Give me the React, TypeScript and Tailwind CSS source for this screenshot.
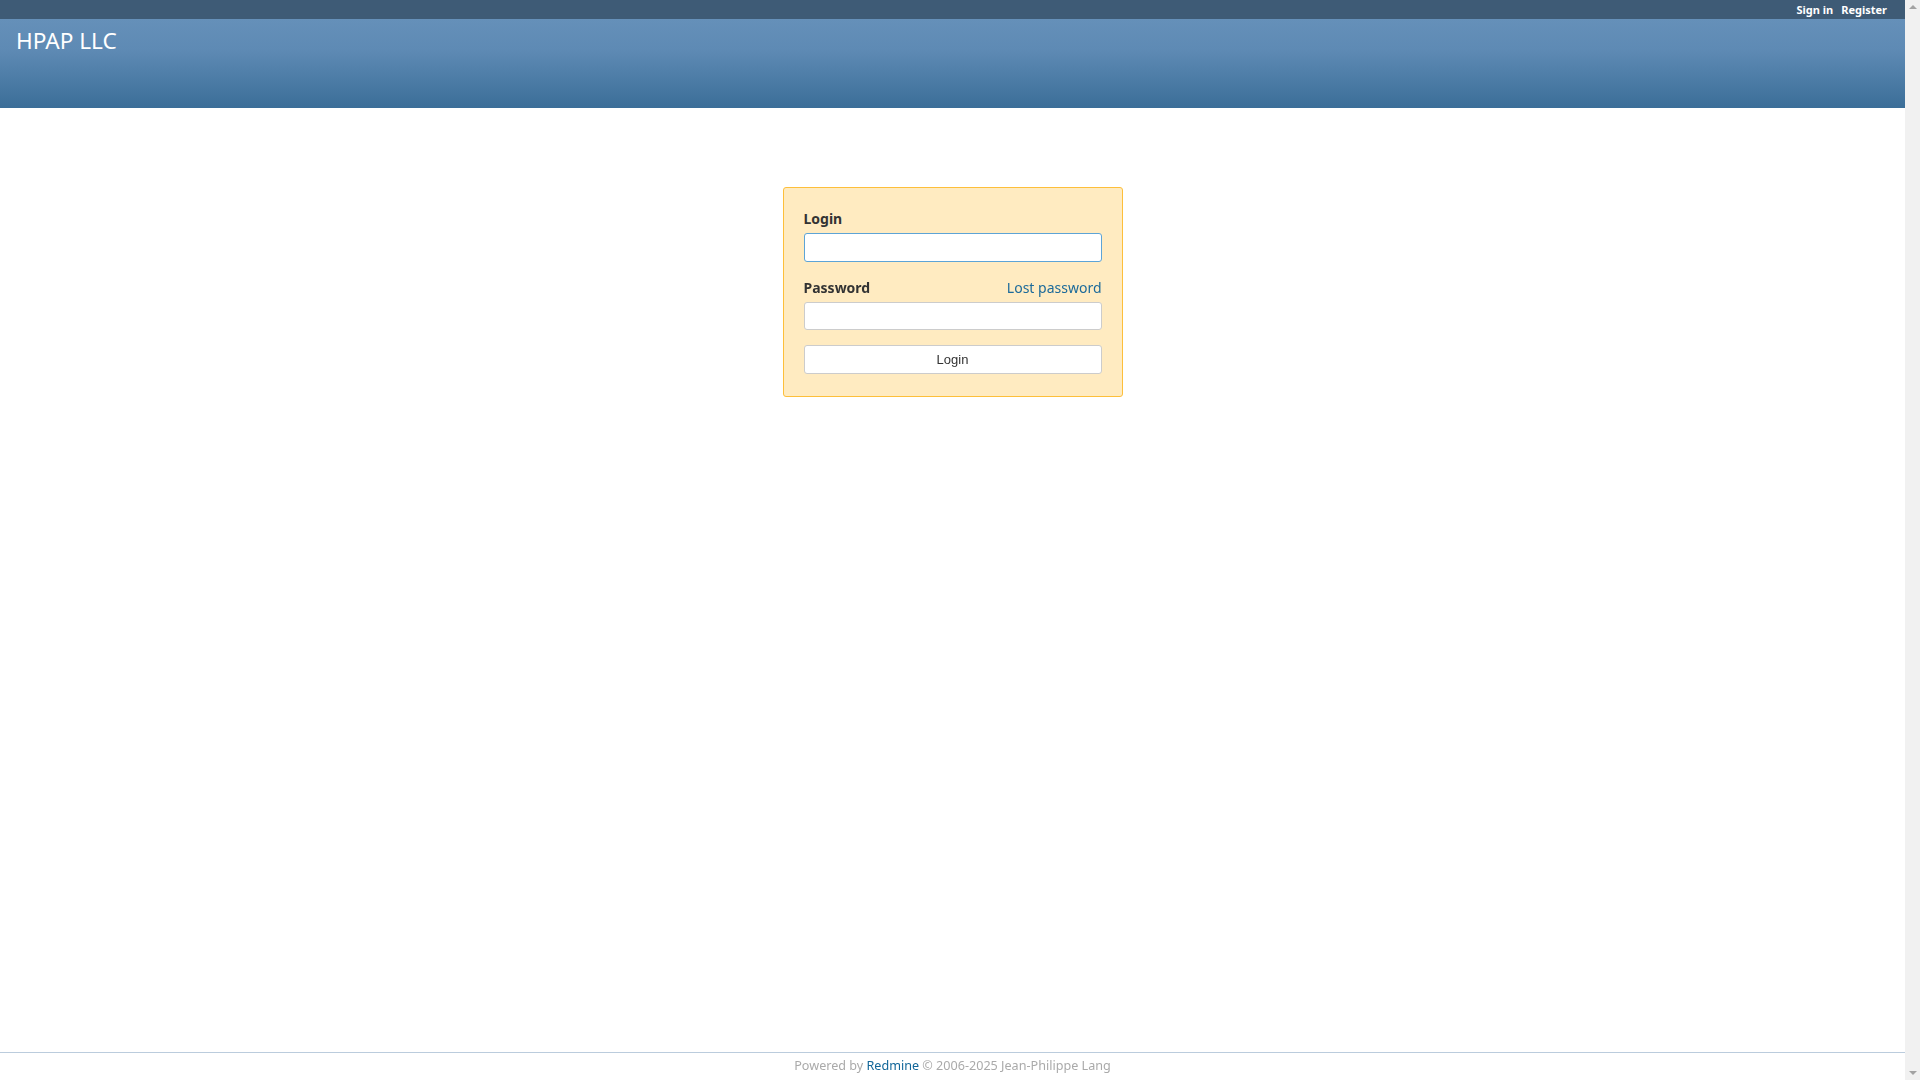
import React from 'react';

const font = { fontFamily: '"Noto Sans", "Open Sans", sans-serif' };

function TopMenu() {
  return (
    <div className="h-[19px] bg-[#3e5b76] flex items-center justify-end pr-[18px] gap-[8px] text-[11px] font-bold text-white leading-none">
      <a href="#">Sign in</a>
      <a href="#">Register</a>
    </div>
  );
}

function Header() {
  return (
    <div className="h-[89px] bg-[linear-gradient(to_bottom,#6590b9_0%,#5e8ab4_35%,#3b6e98_100%)] pl-[16px] pt-[6px]">
      <h1 className="text-[22.6px] text-white font-normal leading-[32px]">HPAP LLC</h1>
    </div>
  );
}

function LoginBox() {
  return (
    <div className="w-[340px] bg-[#ffebc1] border border-[#fdbf3b] rounded-[3px] px-[20px] pt-[21px] pb-[22px] text-[14px] text-[#333]">
      <label className="block font-bold leading-[20px]">Login</label>
      <input
        autoFocus
        className="mt-[4px] block w-full h-[29px] bg-white border border-[#5da4d6] rounded-[3px] outline-none px-2"
      />
      <div className="mt-[16px] flex justify-between items-end leading-[20px]">
        <label className="font-bold">Password</label>
        <a href="#" className="text-[#1c6a9a]">Lost password</a>
      </div>
      <input
        type="password"
        className="mt-[4px] block w-full h-[28px] bg-white border border-[#cccccc] rounded-[3px] outline-none px-2"
      />
      <button
        className="mt-[15px] block w-full h-[29px] bg-white border border-[#cccccc] rounded-[3px] text-[13px] text-[#333]"
        style={{ fontFamily: '"Liberation Sans", Arial, sans-serif' }}
      >
        Login
      </button>
    </div>
  );
}

function Footer() {
  return (
    <div className="border-t border-[#bbccdd] h-[28px] flex items-center justify-center text-[12.6px] text-[#aaaaaa]">
      <span>
        Powered by <a href="#" className="text-[#116699]">Redmine</a> © 2006-2025 Jean-Philippe Lang
      </span>
    </div>
  );
}

function Scrollbar() {
  return (
    <div className="w-[15px] bg-[#f1f1f1] flex flex-col justify-between items-center py-[5px]">
      <div className="w-0 h-0 border-l-[4px] border-r-[4px] border-b-[4px] border-l-transparent border-r-transparent border-b-[#a3a3a3]" />
      <div className="w-0 h-0 border-l-[4px] border-r-[4px] border-t-[4px] border-l-transparent border-r-transparent border-t-[#a3a3a3]" />
    </div>
  );
}

export default function App() {
  return (
    <div className="w-screen h-screen overflow-hidden flex bg-white" style={font}>
      <div className="flex-1 flex flex-col">
        <TopMenu />
        <Header />
        <div className="flex-1 flex justify-center pt-[79px]">
          <div>
            <LoginBox />
          </div>
        </div>
        <Footer />
      </div>
      <Scrollbar />
    </div>
  );
}
